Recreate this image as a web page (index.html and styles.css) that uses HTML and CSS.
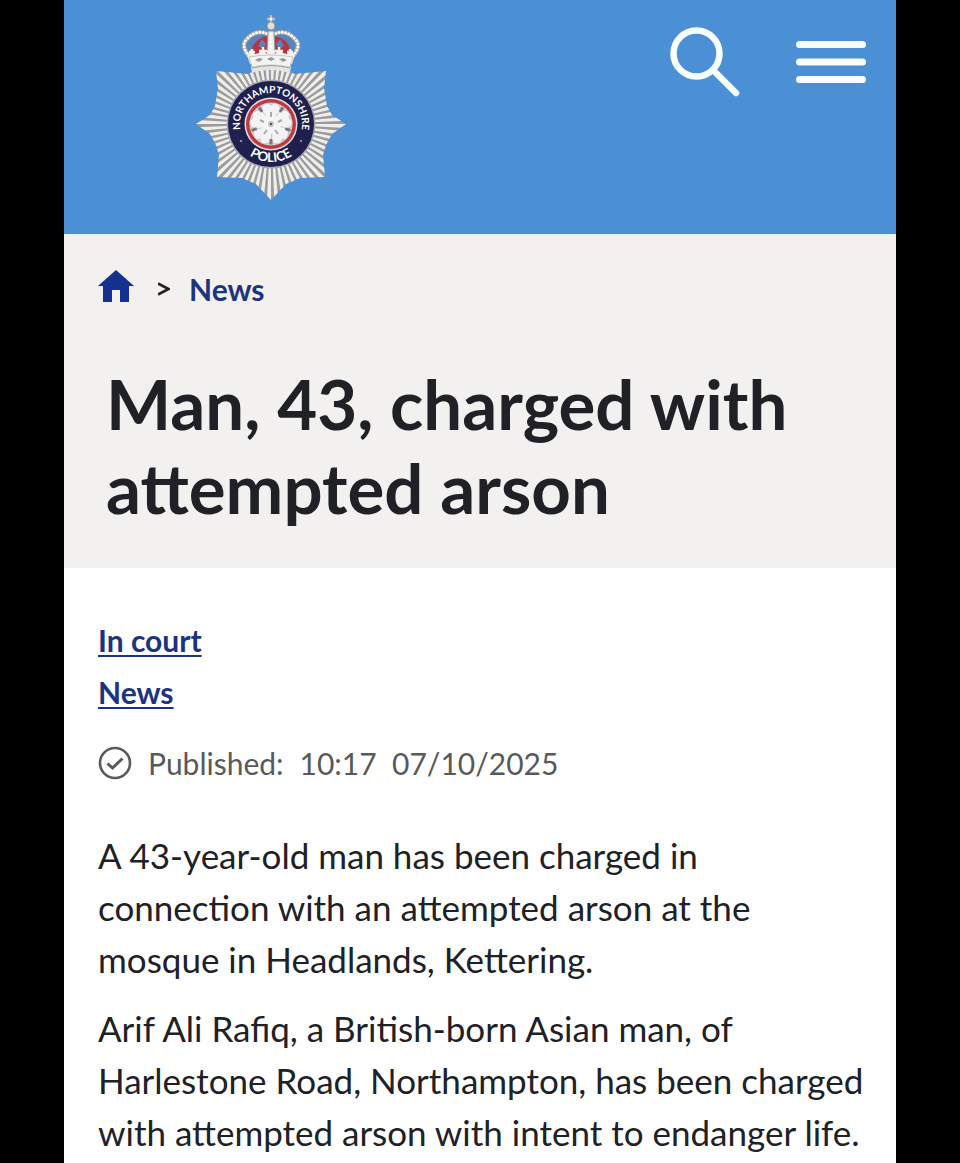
FILE: index.html
```html
<!DOCTYPE html>
<html lang="en">
<head>
<meta charset="utf-8">
<meta name="viewport" content="width=device-width, initial-scale=1">
<title>Man, 43, charged with attempted arson</title>
<link rel="stylesheet" href="styles.css">
</head>
<body>
<div class="page">
  <header class="site-header">
    <a class="crest-link" href="#" aria-label="Northamptonshire Police home">
      <svg class="crest" viewBox="0 0 150 188" role="img" aria-label="Northamptonshire Police">
        <defs>
          <clipPath id="star"><path d="M0 111 L14 102 19 93 22 75 20 58 51 61 75 53 99 61 130 58 128 75 131 93 136 102 150 111 136 121 130 132 127 142 129 164 104 165 90 171 75 187 60 171 46 165 21 164 23 142 20 132 14 121Z"/></clipPath>
          <path id="arc-top" d="M45 119 A31 31 0 1 1 105 119"/>
          <path id="arc-bottom" d="M37 111 A38 38 0 0 0 113 111"/>
          <path id="petal" d="M0 -3 C-12 -9 -12 -20 -3 -21 L0 -19 3 -21 C12 -20 12 -9 0 -3Z" fill="#f3f3f5" stroke="#b9b6bb" stroke-width=".7"/>
          <path id="sepal" d="M0 -15V-20.500" transform="rotate(36)" stroke="#77797d" stroke-width="3"/>
        </defs>
        <g clip-path="url(#star)">
          <rect width="150" height="188" fill="#9b9b9b"/>
          <circle cx="75" cy="111" r="40" fill="none" stroke="#eeeeec" stroke-width="80" pathLength="128" stroke-dasharray="1.100 .9"/>
        </g>
        <circle cx="75" cy="111" r="44.500" fill="#a7a8b5"/>
        <circle cx="75" cy="111" r="43" fill="#20204e"/>
        <circle cx="75" cy="111" r="26.500" fill="#e9dcdf"/>
        <circle cx="75" cy="111" r="25" fill="#bd3b40"/>
        <circle cx="75" cy="111" r="21.500" fill="#e3d3d6"/>
        <g transform="translate(75 111)">
          <use href="#petal"/><use href="#petal" transform="rotate(72)"/><use href="#petal" transform="rotate(144)"/><use href="#petal" transform="rotate(216)"/><use href="#petal" transform="rotate(288)"/>
          <use href="#sepal"/><use href="#sepal" transform="rotate(72)"/><use href="#sepal" transform="rotate(144)"/><use href="#sepal" transform="rotate(216)"/><use href="#sepal" transform="rotate(288)"/>
          <circle r="10" fill="#f5f5f5"/>
          <path d="M0 -7V-12M7 -2L11 -4M4 6L7 10M-4 6L-7 10M-7 -2L-11 -4" stroke="#a9a9ac" stroke-width="2"/>
          <circle r="3" fill="#c5c5c6"/><circle r="1.200" fill="#555"/>
        </g>
        <circle cx="45" cy="128" r="1.200" fill="#8587aa"/><circle cx="105" cy="128" r="1.200" fill="#8587aa"/>
        <text class="crest-name"><textPath href="#arc-top" startOffset="50%">NORTHAMPTONSHIRE</textPath></text>
        <text class="crest-police"><textPath href="#arc-bottom" startOffset="50%">POLICE</textPath></text>
        <g>
          <path d="M53 44 Q44 32 51 26 Q60 16 73 21 L75 24 77 21 Q90 16 99 26 Q106 32 97 44Z" fill="#5a82bd"/>
          <path d="M57 42 Q53 32 65 25 L71 23 V41ZM93 42 Q97 32 85 25 L79 23 V41Z" fill="#b5363f"/>
          <path d="M62 33 L66 26 70 31 67 36ZM88 33 L84 26 80 31 83 36Z" fill="#5a82bd"/>
          <path d="M53 43 Q44 32 51 26 Q60 16 72 21M97 43 Q106 32 99 26 Q90 16 78 21" fill="none" stroke="#a5a6a6" stroke-width="4.500"/>
          <path d="M53 43 Q44 32 51 26 Q60 16 72 21M97 43 Q106 32 99 26 Q90 16 78 21" fill="none" stroke="#fff" stroke-width="3" stroke-linecap="round" stroke-dasharray="0 3.400"/>
          <path d="M72 18 H78 L79 39 H71Z" fill="#ececea" stroke="#929493"/>
          <path d="M75 21V38" stroke="#fff" stroke-width="3" stroke-linecap="round" stroke-dasharray="0 4"/>
          <circle cx="75" cy="13" r="4" fill="#dedfdd" stroke="#8f938f"/>
          <path d="M75 2V10M71 6H79" stroke="#b5bbb6" stroke-width="2.500"/><circle cx="75" cy="6" r="1.400" fill="#fff"/>
          <path d="M51 42 L55 37 59 41 63 40 67 36 71 41 75 36 79 41 83 36 87 40 91 41 95 37 99 42 96 51 Q75 47 54 51Z" fill="#f1f0ee"/>
          <path d="M56 36V42M53 39H59M67 34V42M63 38H71M75 34V43M71 39H79M83 34V42M79 38H87M94 36V42M91 39H97" stroke="#f4f3f0" stroke-width="2.500"/>
          <path d="M53 44 Q75 40 97 44 L94 54 Q75 50 56 54Z" fill="#f4f3f1" stroke="#bcbdbb" stroke-width=".8"/>
          <path d="M59 47 L63 45 67 46 63 49ZM71 46 L75 44 79 46 75 48ZM83 46 L87 45 91 47 87 49Z" fill="#969996"/>
          <path d="M55 54 Q75 49 95 54 L94 60 Q75 54 56 60Z" fill="#e4e4e2"/>
          <path d="M56 55 Q75 50 94 55" fill="none" stroke="#999b9b" stroke-width="1"/>
        </g>
      </svg>
    </a>
    <div class="header-actions">
      <button class="icon-button" type="button" aria-label="Search">
        <svg class="action-icon" viewBox="0 0 72 72" aria-hidden="true"><circle cx="27.500" cy="27.500" r="23" fill="none" stroke="#f8fdff" stroke-width="6.500"/><path d="M44 44 L67 67" stroke="#f8fdff" stroke-width="6.500" stroke-linecap="round"/></svg>
      </button>
      <button class="icon-button" type="button" aria-label="Menu">
        <svg class="action-icon" viewBox="0 0 72 72" aria-hidden="true"><path d="M4.500 18.500H67.500M4.500 36H67.500M4.500 53.500H67.500" stroke="#f8fdff" stroke-width="7" stroke-linecap="round"/></svg>
      </button>
    </div>
  </header>
  <section class="hero">
    <nav class="breadcrumb" aria-label="Breadcrumb">
      <a class="home-link" href="#" aria-label="Home"><svg class="home-icon" viewBox="0 0 36 32" aria-hidden="true"><path d="M18 0 L36 16 H31 V32 H22 V20 H14 V32 H5 V16 H0Z" fill="#15318f"/></svg></a>
      <svg class="chevron" viewBox="0 0 12 14" aria-hidden="true"><path d="M0 1.500 L10.500 7 L0 12.500" fill="none" stroke="#222" stroke-width="2.700"/></svg>
      <a class="crumb" href="#">News</a>
    </nav>
    <h1 class="title">Man, 43, charged with attempted arson</h1>
  </section>
  <main class="article">
    <ul class="tags">
      <li><a class="tag" href="#">In court</a></li>
      <li><a class="tag" href="#">News</a></li>
    </ul>
    <div class="published">
      <svg class="check" viewBox="0 0 34 34" aria-hidden="true"><circle cx="17" cy="17" r="15" fill="none" stroke="#58595b" stroke-width="2.600"/><path d="M9.500 17.500 L14.500 22 L24.500 12.500" fill="none" stroke="#58595b" stroke-width="3"/></svg>
      <span>Published:</span><time datetime="2025-10-07T10:17">10:17&nbsp; 07/10/2025</time>
    </div>
    <p class="copy">A 43-year-old man has been charged in connection with an attempted arson at the mosque in Headlands, Kettering.</p>
    <p class="copy">Arif Ali Rafiq, a British-born Asian man, of Harlestone Road, Northampton, has been charged with attempted arson with intent to endanger life.</p>
  </main>
</div>
</body>
</html>
```
FILE: styles.css
```css
* { box-sizing: border-box; }
body {
  margin: 0;
  padding: 0 64px;
  background: #000;
  color: #202126;
  font-family: Lato, "Open Sans", sans-serif;
}
.page { min-height: 100vh; background: #fff; }
.site-header {
  display: flex;
  justify-content: space-between;
  align-items: flex-start;
  padding: 13px 29px 33px 132px;
  background: #4b8fd4;
}
.crest-link { display: block; }
.crest { display: block; width: 150px; height: 188px; }
.crest-name, .crest-police {
  fill: #fff;
  font-family: Lato, sans-serif;
  font-weight: 700;
  text-anchor: middle;
}
.crest-name { font-size: 10px; }
.crest-police { font-size: 13px; }
.header-actions { display: flex; gap: 54px; padding-top: 13px; }
.icon-button { padding: 0; border: 0; background: none; cursor: pointer; }
.action-icon { display: block; width: 72px; height: 72px; }
.hero {
  padding: 33px 34px 38px;
  border-top: 2px solid #e6f2fa;
  background: #f2f1f0;
}
.breadcrumb { display: flex; align-items: center; height: 40px; }
.home-icon { display: block; width: 36px; height: 32px; margin-bottom: 6px; }
.chevron { width: 12px; height: 16px; margin: 0 19px 0 24px; }
.crumb, .tag { color: #1c3380; font-size: 30px; font-weight: 700; line-height: 40px; }
.crumb { text-decoration: none; }
.title {
  margin: 53px 0 0;
  padding: 0 8px;
  font-size: 69px;
  font-weight: 700;
  line-height: 84px;
}
.article { padding: 48px 24px 4px 34px; }
.tags { margin: 0; padding: 4px 0 0; list-style: none; line-height: 52px; }
.tag { text-decoration-thickness: 2px; text-underline-offset: 3px; }
.published {
  display: flex;
  align-items: center;
  gap: 16px;
  margin: 13px 0 40px;
  color: #58595b;
  font-size: 30px;
  line-height: 52px;
}
.check { width: 34px; height: 34px; }
.copy { margin: 0 0 17px; font-size: 35px; line-height: 52px; }
.copy:last-child { margin-bottom: 0; }
```
